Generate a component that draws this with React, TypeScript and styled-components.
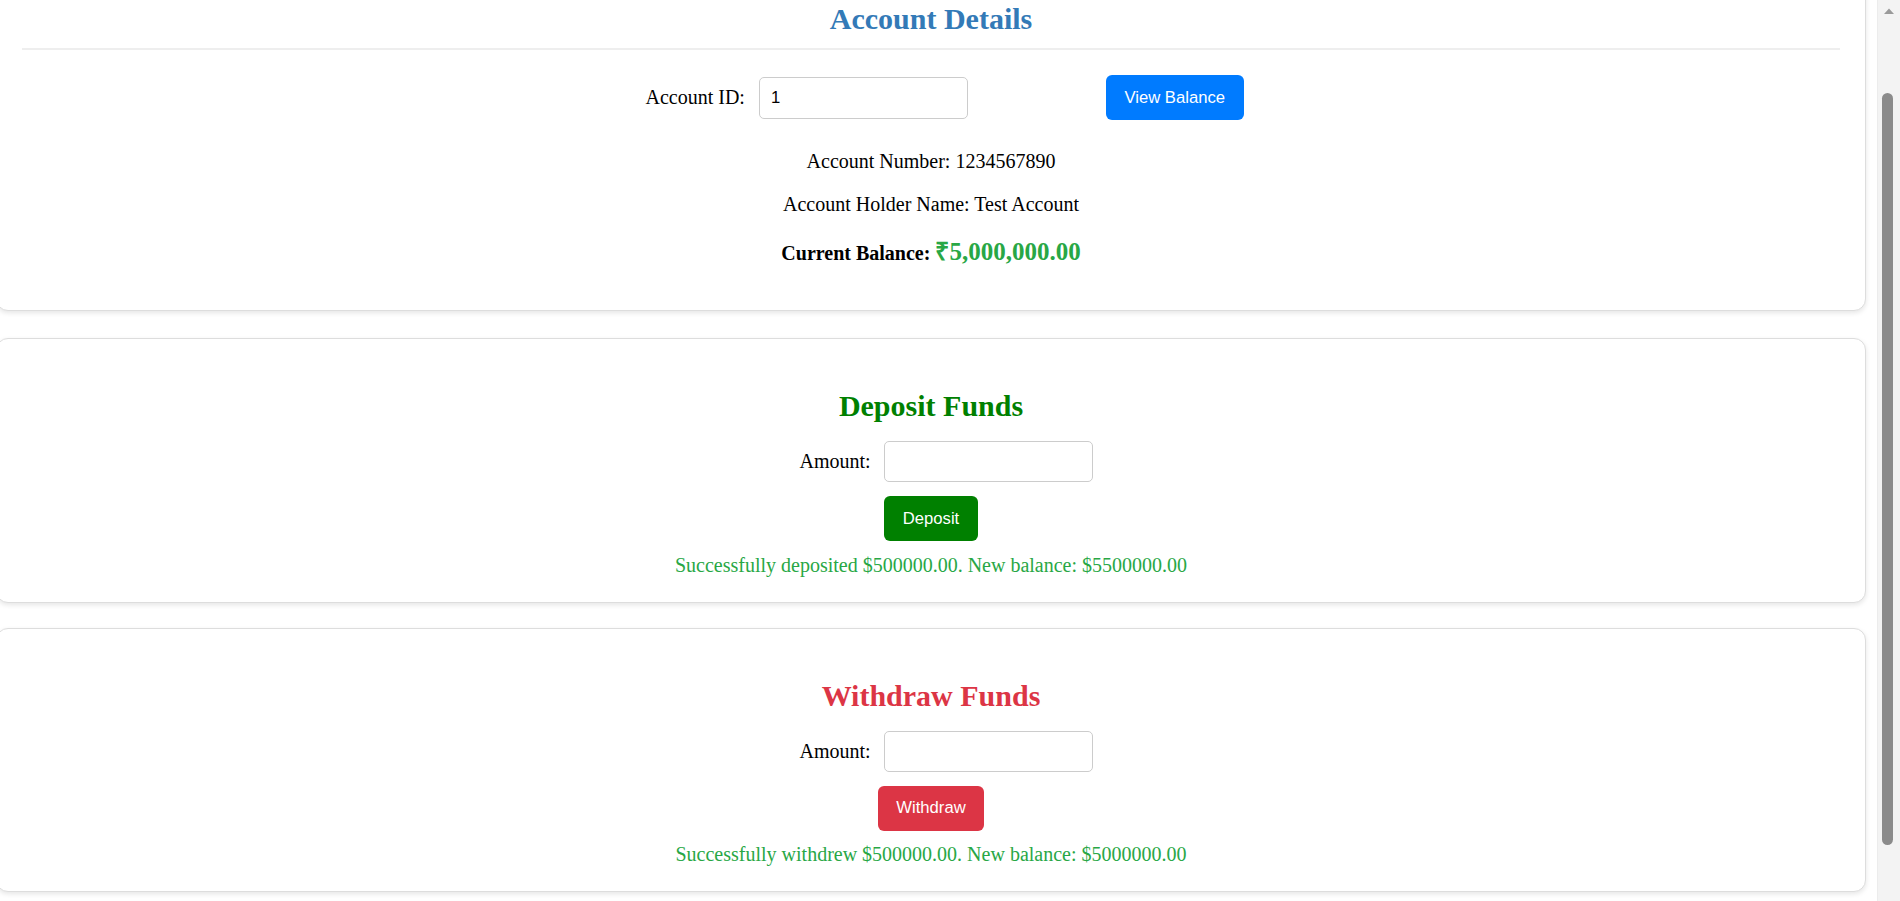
import React, { useLayoutEffect, useState } from "react";
import styled, { createGlobalStyle } from "styled-components";

const GlobalStyle = createGlobalStyle`
  html {
    scrollbar-width: none;
  }
  html::-webkit-scrollbar {
    display: none;
  }
  body {
    margin: 0;
    background: #ffffff;
    color: #000000;
    font-family: "Liberation Serif", "Times New Roman", serif;
    font-size: 20px;
  }
`;

const Page = styled.main`
  padding: 42px 34px 56px 0;
`;

const Card = styled.section<{ $gapBelow?: number }>`
  background: #ffffff;
  border: 1px solid #dddddd;
  border-radius: 12px;
  padding: 25px;
  margin: 0 0 ${(p) => p.$gapBelow ?? 0}px -4px;
  box-shadow: 0 2px 5px rgba(0, 0, 0, 0.1);
`;

const Title = styled.h2<{ $color: string; $divided?: boolean }>`
  margin: 25px 0 ${(p) => (p.$divided ? "25px" : "17.5px")};
  padding-bottom: ${(p) => (p.$divided ? "11.5px" : "0")};
  border-bottom: ${(p) => (p.$divided ? "2px solid #eeeeee" : "none")};
  font-size: 30px;
  line-height: 34.5px;
  font-weight: bold;
  text-align: center;
  color: ${(p) => p.$color};
`;

const FieldRow = styled.div<{ $shift: number; $gapBelow?: number }>`
  display: flex;
  align-items: center;
  justify-content: center;
  padding-left: ${(p) => p.$shift}px;
  margin-bottom: ${(p) => p.$gapBelow ?? 0}px;
`;

const Label = styled.label<{ $gap: number }>`
  margin-right: ${(p) => p.$gap}px;
  font-size: 20px;
`;

const Input = styled.input<{ $height: number }>`
  box-sizing: border-box;
  width: 209px;
  height: ${(p) => p.$height}px;
  padding: 0 11px;
  border: 1px solid #cccccc;
  border-radius: 5px;
  font-family: "Liberation Sans", Arial, sans-serif;
  font-size: 16.67px;
  color: #000000;
  background: #ffffff;
  outline: none;
`;

const Button = styled.button<{ $bg: string; $offset?: number }>`
  height: 45px;
  padding: 0 18.5px;
  margin-left: ${(p) => p.$offset ?? 0}px;
  border: none;
  border-radius: 6px;
  background: ${(p) => p.$bg};
  color: #ffffff;
  font-family: "Liberation Sans", Arial, sans-serif;
  font-size: 16.67px;
  cursor: pointer;
`;

const Info = styled.p`
  margin: 20px 0;
  text-align: center;
  font-size: 20px;
  line-height: 23px;
`;

const BalanceLine = styled.p`
  margin: 22.5px 0 17.5px;
  text-align: center;
  font-size: 20px;
  line-height: 29px;
`;

const Amount = styled.span`
  font-size: 25px;
  line-height: 25px;
  font-weight: bold;
  color: #28a745;
`;

const TxForm = styled.div`
  display: flex;
  flex-direction: column;
  align-items: center;
`;

const ActionButton = styled(Button)`
  margin-top: 14px;
`;

const Message = styled.p`
  margin: 12.5px 0 0;
  text-align: center;
  font-size: 20px;
  line-height: 23px;
  color: #28a745;
`;

/* Browser scrollbar as it appears in the captured window (overlays the right edge). */
const ScrollRail = styled.div`
  position: fixed;
  top: 0;
  right: 0;
  width: 23px;
  height: 100vh;
  box-sizing: border-box;
  background: #f3f3f3;
  border-left: 1px solid #ececec;
  display: flex;
  flex-direction: column;
  align-items: center;
`;

const RailArrow = styled.svg`
  flex: none;
  width: 22px;
  height: 23px;
  display: block;
`;

const RailThumb = styled.div`
  flex: none;
  width: 11px;
  height: 752px;
  margin: 70px 4px 0 0;
  border-radius: 6px;
  background: #8b8b8b;
`;

type TxProps = {
  title: string;
  color: string;
  action: string;
  message: string;
  gapBelow?: number;
};

function TransactionCard({ title, color, action, message, gapBelow }: TxProps) {
  const [value, setValue] = useState("");
  return (
    <Card $gapBelow={gapBelow}>
      <Title $color={color}>{title}</Title>
      <TxForm>
        <FieldRow $shift={30}>
          <Label $gap={13}>Amount:</Label>
          <Input
            $height={41}
            type="text"
            value={value}
            onChange={(e) => setValue(e.target.value)}
          />
        </FieldRow>
        <ActionButton $bg={color}>{action}</ActionButton>
      </TxForm>
      <Message>{message}</Message>
    </Card>
  );
}

export default function App() {
  const [accountId, setAccountId] = useState("1");

  useLayoutEffect(() => {
    if ("scrollRestoration" in window.history) {
      window.history.scrollRestoration = "manual";
    }
    window.scrollTo(0, 91);
    const t = window.setTimeout(() => window.scrollTo(0, 91), 50);
    return () => window.clearTimeout(t);
  }, []);

  return (
    <>
      <GlobalStyle />
      <Page>
        <Card $gapBelow={27}>
          <Title $color="#337ab7" $divided>
            Account Details
          </Title>
          <FieldRow $shift={27} $gapBelow={30}>
            <Label $gap={14}>Account ID:</Label>
            <Input
              $height={42}
              type="text"
              value={accountId}
              onChange={(e) => setAccountId(e.target.value)}
            />
            <Button $bg="#007bff" $offset={138}>
              View Balance
            </Button>
          </FieldRow>
          <Info>Account Number: 1234567890</Info>
          <Info>Account Holder Name: Test Account</Info>
          <BalanceLine>
            <strong>Current Balance:</strong> <Amount>₹5,000,000.00</Amount>
          </BalanceLine>
        </Card>
        <TransactionCard
          title="Deposit Funds"
          color="#008000"
          action="Deposit"
          message="Successfully deposited $500000.00. New balance: $5500000.00"
          gapBelow={25}
        />
        <TransactionCard
          title="Withdraw Funds"
          color="#dc3545"
          action="Withdraw"
          message="Successfully withdrew $500000.00. New balance: $5000000.00"
        />
      </Page>
      <ScrollRail aria-hidden="true">
        <RailArrow viewBox="0 0 22 23">
          <path d="M6 14 L11 8.5 L16 14 Z" fill="#9a9a9a" />
        </RailArrow>
        <RailThumb />
      </ScrollRail>
    </>
  );
}
